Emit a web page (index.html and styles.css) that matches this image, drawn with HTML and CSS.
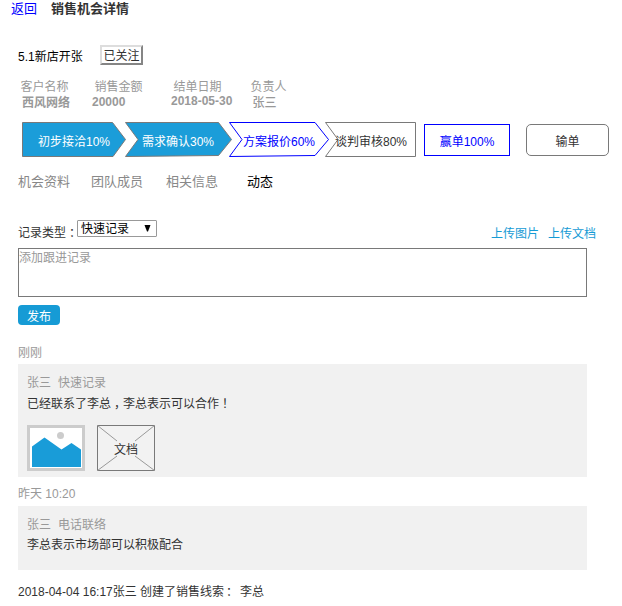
FILE: index.html
```html
<!DOCTYPE html>
<html lang="zh-CN">
<head>
<meta charset="utf-8">
<title>销售机会详情</title>
<link rel="stylesheet" href="styles.css">
</head>
<body>
<header class="top"><a class="back">返回</a><h1>销售机会详情</h1></header>
<section class="deal"><span class="name">5.1新店开张</span><button class="follow">已关注</button></section>
<dl class="facts">
  <div class="customer"><dt>客户名称</dt><dd>西风网络</dd></div>
  <div class="amount"><dt>销售金额</dt><dd>20000</dd></div>
  <div class="date"><dt>结单日期</dt><dd>2018-05-30</dd></div>
  <div class="owner"><dt>负责人</dt><dd>张三</dd></div>
</dl>
<section class="stages">
  <div class="step s1 done"><svg width="105" height="35"><path d="M.5 .5H90.5L103.5 17.5L91 34.5H.5Z"/></svg><span>初步接洽10%</span></div>
  <div class="step s2 done"><svg width="108" height="35"><path d="M.5 .5H93.5L106.500 17.500L93.500 33.500L.5 34.500L13 17.500Z"/></svg><span>需求确认30%</span></div>
  <div class="step s3 current"><svg width="101" height="35"><path d="M.5 .5H86L99.500 17.500L86 33.500L.5 34.500L13 17.500Z"/></svg><span>方案报价60%</span></div>
  <div class="step s4"><svg width="91" height="35"><path d="M.5 .5H90.500V34.500H.5L13 17.500Z"/></svg><span>谈判审核80%</span></div>
  <div class="result win">赢单100%</div>
  <div class="result lose">输单</div>
</section>
<nav class="tabs"><a>机会资料</a><a>团队成员</a><a>相关信息</a><a class="active">动态</a></nav>
<section class="record">
  <div class="record-bar">
    <span class="label">记录类型<span class="punct">：</span></span>
    <div class="select"><span>快速记录</span><svg width="7" height="7"><path d="M.5 0H6.500L4 6.500H3Z"/></svg></div>
    <div class="uploads"><a>上传图片</a><a>上传文档</a></div>
  </div>
  <div class="editor">添加跟进记录</div>
  <button class="publish">发布</button>
</section>
<section class="feed">
  <div class="time now">刚刚</div>
  <article class="card first">
    <p class="meta"><span>张三</span><span>快速记录</span></p>
    <p class="body">已经联系了李总<span class="punct">，</span>李总表示可以合作<span class="punct">！</span></p>
    <div class="files">
      <svg width="58" height="46"><path fill="#ccc" d="M0 0H58V46H0Z"/><path fill="#fff" d="M3 3H55V43H3Z"/><circle cx="33.500" cy="10.500" r="3.500" fill="#ccc"/><path fill="#199cd8" d="M5 21.500L17.500 12.500L34.500 24.500L44.500 18L54 24.500V42H5Z"/></svg>
      <div class="doc"><svg width="58" height="46"><path fill="#f2f2f2" stroke="#797979" d="M.5 .5H57.500V45.500H.5Z"/><path fill="none" stroke="#999" d="M.5 .5L20 16M57.500 .5L38 16M.5 45.500L20 31M57.500 45.500L38 31"/></svg><span>文档</span></div>
    </div>
  </article>
  <div class="time">昨天 10:20</div>
  <article class="card second">
    <p class="meta"><span>张三</span><span>电话联络</span></p>
    <p class="body">李总表示市场部可以积极配合</p>
  </article>
  <p class="log"><span>2018-04-04 16:17张三 创建了销售线索</span><span class="colon">：</span><span>李总</span></p>
</section>
</body>
</html>
```
FILE: styles.css
```css
* { box-sizing: border-box; }
body { margin: 0; width: 622px; height: 606px; overflow: hidden; background: #fff; color: #333; font: 12px/16px "Liberation Sans", "Noto Sans CJK SC", sans-serif; }
h1, p, dl, dd { margin: 0; }
svg { display: block; }
.top { display: flex; gap: 14px; height: 45px; padding: 1px 0 0 11px; font-size: 13px; }
.back { color: #00f; }
h1 { font-size: 13px; line-height: 16px; font-weight: bold; }
.deal { display: flex; gap: 17px; height: 34px; padding-left: 18px; color: #000; }
.name { width: 65px; padding-top: 4px; white-space: nowrap; }
.follow { width: 43px; height: 20px; padding: 1px 0 0; border: 2px solid; border-color: #ddd #858585 #858585 #ddd; background: #fff; color: #333; font: inherit; line-height: 16px; }
.facts { display: flex; height: 43px; padding-left: 20.5px; color: #999; }
.facts dd { margin-left: 1.5px; font-weight: bold; }
.customer { width: 74px; }
.amount { width: 79px; }
.date { width: 77px; }
.facts .amount dd { margin: -1px 0 0 -2.5px; }
.facts .date dd { margin: -2px 0 0 -2.5px; }
.facts .owner dd { margin-left: 2px; font-weight: 500; }
.stages { display: flex; height: 52px; padding-left: 22px; }
.step { display: grid; height: 35px; }
.step > * { grid-area: 1 / 1; }
.step path { fill: #fff; stroke: #797979; }
.step span { padding-top: 12px; white-space: nowrap; }
.s1 span { padding-left: 16px; }
.s2 { margin-left: -2px; }
.s2 span { padding-left: 17px; }
.s3 { margin-left: -4px; }
.s3 span { padding-left: 14px; }
.s4 { margin-left: -5px; }
.s4 span { padding-left: 10px; }
.done { color: #fff; }
.done path { fill: #1b9dd9; }
.current { color: #00f; }
.current path { stroke: #00f; }
.result { height: 32px; margin-top: 2px; padding-top: 9px; border: 1px solid #797979; text-align: center; }
.win { width: 86px; margin-left: 8px; border-color: #00f; color: #00f; }
.lose { width: 83px; margin-left: 16px; border-radius: 5px; }
.tabs { display: flex; height: 46px; padding-left: 18px; color: #888; font-size: 13px; }
.tabs a { width: 73px; }
.tabs a:nth-child(2) { width: 75px; }
.tabs a:nth-child(3) { width: 81px; }
.tabs .active { width: auto; color: #000; }
.record { height: 124px; padding-left: 18px; }
.record-bar { display: flex; height: 28px; }
.label { width: 59px; padding-top: 5px; white-space: nowrap; }
.punct { margin: 0 3px; font-feature-settings: "halt"; }
.select { display: flex; width: 80px; height: 17px; padding: 0 5px 0 3px; justify-content: space-between; border: 1px solid #999; border-radius: 1px; color: #000; }
.select svg { margin-top: 4px; }
.uploads { display: flex; gap: 9px; margin-left: 334px; padding-top: 6px; color: #169bd5; }
.editor { width: 569px; height: 49px; padding: 1px 0 0; border: 1px solid #797979; color: #999; }
.publish { display: block; width: 42px; height: 20px; margin-top: 8px; padding: 4px 0 0; border: 0; border-radius: 4px; background: #169bd5; color: #fff; font: inherit; line-height: 16px; }
.feed { padding-left: 18px; }
.time { height: 29px; padding-top: 9px; color: #999; }
.time.now { height: 20px; padding-top: 1px; }
.card { width: 569px; padding: 11px 9px 0; background: #f1f1f1; }
.first { height: 113px; }
.second { height: 64px; }
.meta { display: flex; gap: 7px; height: 21px; color: #999; }
.second .meta { height: 20px; }
.files { display: flex; gap: 12px; margin-top: 13px; }
.doc { display: grid; }
.doc > * { grid-area: 1 / 1; }
.doc span { padding-top: 17px; text-align: center; }
.log { display: flex; height: 36px; padding-top: 14px; white-space: pre; }
.colon { width: 16px; padding-left: 2px; }
```
